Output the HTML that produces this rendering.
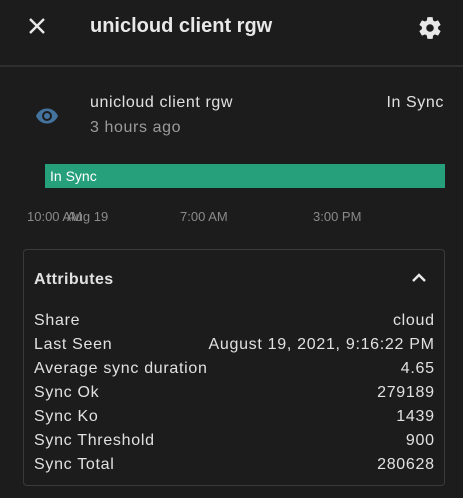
<!DOCTYPE html>
<html><head><style>
body{margin:0;width:463px;height:498px;background:#1c1c1c;font-family:"Liberation Sans",sans-serif;color:#e1e1e1;position:relative;overflow:hidden}
.a{position:absolute;white-space:nowrap}
.row{position:absolute;left:34px;right:29px;height:24px;font-size:16px;letter-spacing:0.7px;display:flex;justify-content:space-between;color:#e1e1e1}
.row span:last-child{margin-right:-0.7px}
</style></head><body>
<svg class="a" style="left:27px;top:16px" width="20" height="20" viewBox="0 0 20 20"><path d="M3 3L17 17M17 3L3 17" stroke="#e8e8e8" stroke-width="2.4"/></svg>
<div class="a" style="left:90px;top:15px;font-size:20px;font-weight:bold;color:#e8e8e8">unicloud client rgw</div>
<svg class="a" style="left:417px;top:15px" width="26" height="26" viewBox="0 0 24 24"><path fill="#e8e8e8" d="M12,15.5A3.5,3.5 0 0,1 8.5,12A3.5,3.5 0 0,1 12,8.5A3.5,3.5 0 0,1 15.5,12A3.5,3.5 0 0,1 12,15.5M19.43,12.97C19.47,12.65 19.5,12.33 19.5,12C19.5,11.67 19.47,11.34 19.43,11L21.54,9.37C21.73,9.22 21.78,8.95 21.66,8.73L19.66,5.27C19.54,5.05 19.27,4.96 19.05,5.05L16.56,6.05C16.04,5.66 15.5,5.32 14.87,5.07L14.5,2.42C14.46,2.18 14.25,2 14,2H10C9.75,2 9.54,2.18 9.5,2.42L9.13,5.07C8.5,5.32 7.96,5.66 7.44,6.05L4.95,5.05C4.73,4.96 4.46,5.05 4.34,5.27L2.34,8.73C2.21,8.95 2.27,9.22 2.46,9.37L4.57,11C4.53,11.34 4.5,11.67 4.5,12C4.5,12.33 4.53,12.65 4.57,12.97L2.46,14.63C2.27,14.78 2.21,15.05 2.34,15.27L4.34,18.73C4.46,18.95 4.73,19.03 4.95,18.95L7.44,17.94C7.96,18.34 8.5,18.68 9.13,18.93L9.5,21.58C9.54,21.82 9.75,22 10,22H14C14.25,22 14.46,21.82 14.5,21.58L14.87,18.93C15.5,18.67 16.04,18.34 16.56,17.94L19.05,18.95C19.27,19.03 19.54,18.95 19.66,18.73L21.66,15.27C21.78,15.05 21.73,14.78 21.54,14.63L19.43,12.97Z"/></svg>
<div class="a" style="left:0;top:65px;width:463px;height:2px;background:#2f2f2f"></div>
<svg class="a" style="left:32px;top:104px" width="30" height="24" viewBox="0 0 24 24"><path fill="#44739e" d="M12,9A3,3 0 0,0 9,12A3,3 0 0,0 12,15A3,3 0 0,0 15,12A3,3 0 0,0 12,9M12,17A5,5 0 0,1 7,12A5,5 0 0,1 12,7A5,5 0 0,1 17,12A5,5 0 0,1 12,17M12,4.5C7,4.5 2.73,7.61 1,12C2.73,16.39 7,19.5 12,19.5C17,19.5 21.27,16.39 23,12C21.27,7.61 17,4.5 12,4.5Z"/></svg>
<div class="a" style="left:90px;top:94px;font-size:16px;letter-spacing:0.6px;color:#e1e1e1">unicloud client rgw</div>
<div class="a" style="right:19px;top:94px;font-size:16px;letter-spacing:0.6px;color:#e1e1e1">In Sync</div>
<div class="a" style="left:90px;top:119px;font-size:16px;letter-spacing:0.6px;color:#9b9b9b">3 hours ago</div>
<div class="a" style="left:45px;top:164px;width:400px;height:24px;background:#26a07a"></div>
<div class="a" style="left:50px;top:168px;font-size:14px;color:#fff">In Sync</div>
<div class="a" style="left:27px;top:209px;font-size:13px;color:#8a8a8a">10:00 AM</div>
<div class="a" style="left:67px;top:209px;font-size:13px;color:#8a8a8a">Aug 19</div>
<div class="a" style="left:180px;top:209px;font-size:13px;color:#8a8a8a">7:00 AM</div>
<div class="a" style="left:313px;top:209px;font-size:13px;color:#8a8a8a">3:00 PM</div>
<div class="a" style="left:23px;top:249px;width:420px;height:235px;border:1px solid #3a3a3a;border-radius:4px"></div>
<div class="a" style="left:34px;top:271px;font-size:16px;font-weight:bold;letter-spacing:0.4px;color:#e1e1e1">Attributes</div>
<svg class="a" style="left:411px;top:272px" width="16" height="12" viewBox="0 0 16 12"><path d="M2 9L8 3L14 9" stroke="#e8e8e8" stroke-width="2.4" fill="none"/></svg>
<div class="row" style="top:312px"><span>Share</span><span>cloud</span></div>
<div class="row" style="top:336px"><span>Last Seen</span><span>August 19, 2021, 9:16:22 PM</span></div>
<div class="row" style="top:360px"><span>Average sync duration</span><span>4.65</span></div>
<div class="row" style="top:384px"><span>Sync Ok</span><span>279189</span></div>
<div class="row" style="top:408px"><span>Sync Ko</span><span>1439</span></div>
<div class="row" style="top:432px"><span>Sync Threshold</span><span>900</span></div>
<div class="row" style="top:456px"><span>Sync Total</span><span>280628</span></div>
</body></html>
